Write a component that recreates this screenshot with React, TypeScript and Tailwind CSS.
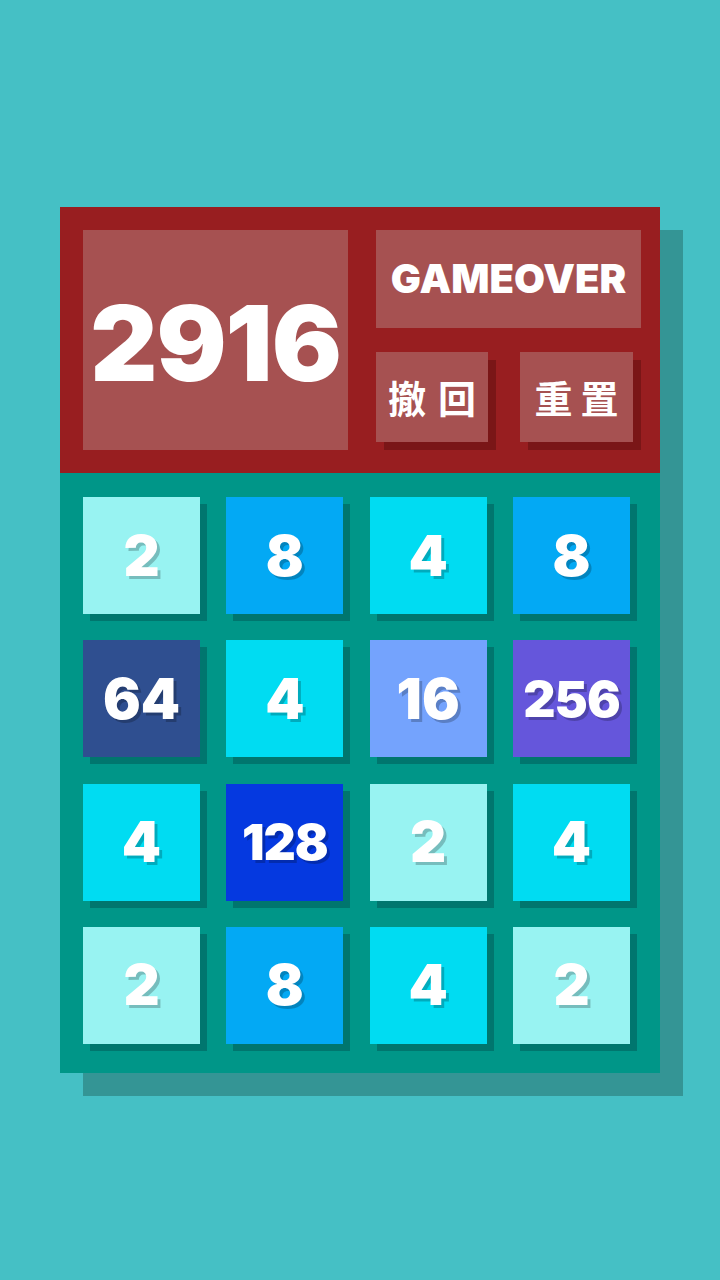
import React from "react";

type TileValue = 2 | 4 | 8 | 16 | 64 | 128 | 256;

const TILE_BG: Record<TileValue, string> = {
  2: "bg-[#98f3f2]",
  4: "bg-[#00dcf2]",
  8: "bg-[#03a9f4]",
  16: "bg-[#74a3fd]",
  64: "bg-[#2f4f90]",
  128: "bg-[#0539e0]",
  256: "bg-[#6556db]",
};

const board: TileValue[][] = [
  [2, 8, 4, 8],
  [64, 4, 16, 256],
  [4, 128, 2, 4],
  [2, 8, 4, 2],
];

const numFont = { fontFamily: "Inter, 'Noto Sans', sans-serif" };
const cjkFont = { fontFamily: "'Noto Sans CJK TC', 'Noto Sans CJK SC', sans-serif" };

function Tile({ value }: { value: TileValue }) {
  const size = value >= 100 ? "text-[50px] tracking-[-1px]" : "text-[56px]";
  return (
    <div
      className={`w-[117px] h-[117px] flex items-center justify-center shadow-[7px_7px_0_#00766e] ${TILE_BG[value]}`}
    >
      <span
        className={`text-white font-black leading-none [text-shadow:3px_3px_0_rgba(0,0,0,0.22)] ${size}`}
        style={numFont}
      >
        {value}
      </span>
    </div>
  );
}

export default function App() {
  return (
    <div className="min-h-[1280px] w-full bg-[#45c0c5] flex justify-center items-start pt-[207px]">
      <div className="w-[600px] shadow-[23px_23px_0_#349595]">
        {/* score + controls */}
        <div className="h-[266px] bg-[#981e20] flex pl-[23px] pt-[23px]">
          <div className="w-[265px] h-[220px] bg-[#a65151] flex items-center justify-center">
            <span className="text-white font-black text-[104px] leading-none tracking-[-1px] mt-[6px]" style={numFont}>
              2916
            </span>
          </div>
          <div className="ml-[28px] w-[265px] flex flex-col gap-[24px]">
            <div className="h-[98px] bg-[#a65151] flex items-center justify-center">
              <span className="text-white font-black text-[40px] leading-none" style={numFont}>
                GAMEOVER
              </span>
            </div>
            <div className="flex gap-[32px]">
              <button className="w-[112px] h-[90px] bg-[#a65151] shadow-[8px_8px_0_#7a1617] flex items-center justify-center">
                <span className="text-white font-bold text-[38px] leading-none tracking-[12px] pl-[12px]" style={cjkFont}>
                  撤回
                </span>
              </button>
              <button className="w-[113px] h-[90px] bg-[#a65151] shadow-[8px_8px_0_#7a1617] flex items-center justify-center">
                <span className="text-white font-bold text-[38px] leading-none tracking-[8px] pl-[8px]" style={cjkFont}>
                  重置
                </span>
              </button>
            </div>
          </div>
        </div>
        {/* board */}
        <div className="h-[600px] bg-[#009688] pt-[24px] pl-[23px]">
          <div className="grid grid-cols-[repeat(4,117px)] gap-x-[26.33px] gap-y-[26.33px]">
            {board.flat().map((v, i) => (
              <Tile key={i} value={v} />
            ))}
          </div>
        </div>
      </div>
    </div>
  );
}
